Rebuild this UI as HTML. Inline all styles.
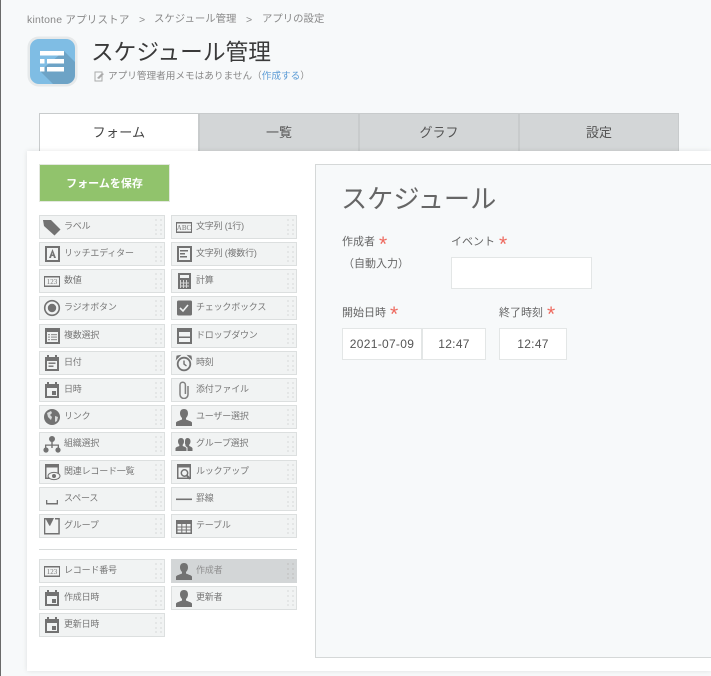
<!DOCTYPE html>
<html lang="ja">
<head>
<meta charset="utf-8">
<style>
html,body{margin:0;padding:0;}
body{width:711px;height:676px;position:relative;overflow:hidden;background:#f7f9fa;font-family:"Liberation Sans","Noto Sans CJK JP",sans-serif;color:#555;}
.a{position:absolute;white-space:nowrap;}
.tab{position:absolute;top:113px;height:38px;width:160px;box-sizing:border-box;background:#d3d6d7;border:1px solid #c8cbcc;border-bottom:0;text-align:center;line-height:38px;font-size:13px;color:#555;}
.it{position:absolute;width:126px;height:24px;box-sizing:border-box;background:#f1f3f3;border:1px solid #dcdfdf;}
.it svg.i{position:absolute;left:3px;top:2px;width:18px;height:18px;fill:#727272;}
.it svg text{font-family:"Liberation Serif",serif;font-size:7px;fill:#777;text-anchor:middle;}
.it span{position:absolute;left:24px;top:0;line-height:20px;font-size:9px;letter-spacing:-.2px;color:#777;white-space:nowrap;}
.it svg.g{position:absolute;left:114px;top:2px;width:9px;height:18px;}
.inp{position:absolute;box-sizing:border-box;background:#fff;border:1px solid #e3e6e6;text-align:center;font-size:12px;color:#555;letter-spacing:.3px;}
.l{position:absolute;font-size:11px;color:#666;white-space:nowrap;line-height:16px;}
.s{position:absolute;font-size:21px;line-height:20px;height:14px;overflow:hidden;color:#ee6a5f;font-family:"Liberation Sans",sans-serif;}
</style>
</head>
<body>
<svg width="0" height="0" style="position:absolute">
<defs>
<symbol id="grip" viewBox="0 0 9 18"><g fill="#e4e6e6"><rect x="1" y="1" width="2" height="2"/><rect x="6" y="1" width="2" height="2"/><rect x="1" y="6" width="2" height="2"/><rect x="6" y="6" width="2" height="2"/><rect x="1" y="11" width="2" height="2"/><rect x="6" y="11" width="2" height="2"/><rect x="1" y="15" width="2" height="2"/><rect x="6" y="15" width="2" height="2"/></g></symbol>
<symbol id="cal" viewBox="0 0 18 18"><path fill-rule="evenodd" d="M4 1h2v2h6V1h2v2h2v14H2V3h2zM4 7v8h10V7z"/><rect x="9" y="10" width="4" height="4"/></symbol>
<symbol id="user" viewBox="0 0 18 18"><path d="M9 1c3 0 4 2 4 4.500 0 2-1 3.500-2 4.500v1.500c2 1 5 1.500 6 3V18H1v-3.500c1-1.500 4-2 6-3V10C6 9 5 7.500 5 5.500 5 3 6 1 9 1z"/></symbol>
</defs>
</svg>

<div class="a" style="left:0;top:0;width:1px;height:676px;background:#6a6a6a;"></div>

<div class="a" style="left:27px;top:13px;font-size:10.500px;line-height:14px;color:#888;letter-spacing:.2px;">kintone アプリストア</div>
<div class="a" style="left:139px;top:13px;font-size:10.500px;line-height:14px;color:#888;">&gt;</div>
<div class="a" style="left:154px;top:13px;font-size:10.400px;line-height:14px;color:#888;">スケジュール管理</div>
<div class="a" style="left:246px;top:13px;font-size:10.500px;line-height:14px;color:#888;">&gt;</div>
<div class="a" style="left:262px;top:13px;font-size:10.400px;line-height:14px;color:#888;">アプリの設定</div>

<svg class="a" style="left:27px;top:36px" width="51" height="51" viewBox="0 0 51 51">
<rect x="0.500" y="0.500" width="50" height="50" rx="11" fill="#e6e9ea"/>
<rect x="3" y="3" width="45" height="45" rx="9" fill="#7fbde4"/>
<path d="M37 15 L48 26 V39 a9 9 0 0 1 -9 9 H26 L13 35 Z" fill="#6da3c6"/>
<g fill="#fff"><rect x="13" y="15" width="24" height="4.500"/><rect x="13" y="23" width="4.500" height="4.500"/><rect x="20" y="23" width="17" height="4.500"/><rect x="13" y="31" width="4.500" height="4.500"/><rect x="20" y="31" width="17" height="4.500"/></g>
</svg>

<div class="a" style="left:91px;top:37px;font-size:22.700px;line-height:30px;color:#3a3a3a;">スケジュール管理</div>
<svg class="a" style="left:94px;top:71px" width="11" height="11" viewBox="0 0 11 11"><path d="M1 1h7v9H1z" fill="none" stroke="#aaa"/><path d="M3 7l5-5 2 1-5 5z" fill="#aaa"/></svg>
<div class="a" style="left:108px;top:70px;font-size:9.650px;line-height:14px;color:#888;">アプリ管理者用メモはありません（<span style="color:#5b9bd5">作成する</span>）</div>

<div class="tab" style="left:39px;background:#fff;color:#444;border-color:#c8cbcc;letter-spacing:.3px;">フォーム</div>
<div class="tab" style="left:199px;">一覧</div>
<div class="tab" style="left:359px;">グラフ</div>
<div class="tab" style="left:519px;">設定</div>

<div class="a" style="left:27px;top:151px;width:684px;height:520px;background:#fff;box-shadow:0 0 5px rgba(0,0,0,.1);"></div>

<div class="a" style="left:39px;top:164px;width:131px;height:38px;box-sizing:border-box;background:#91c36c;border:1px solid #e3e8df;color:#fff;font-size:11px;font-weight:700;text-align:center;line-height:38px;">フォームを保存</div>

<!-- Palette -->
<div class="it" style="left:39px;top:215px"><svg class="i" viewBox="0 0 18 18"><path d="M0 2h8l9.500 9.500-6 6L1 8z"/></svg><span>ラベル</span><svg class="g"><use href="#grip"/></svg></div>
<div class="it" style="left:171px;top:215px"><svg class="i" viewBox="0 0 18 18"><path fill-rule="evenodd" d="M1 4h16v11H1zM2 5.500v8h14v-8z"/><text x="9" y="12">ABC</text></svg><span>文字列 (1行)</span><svg class="g"><use href="#grip"/></svg></div>

<div class="it" style="left:39px;top:242px"><svg class="i" viewBox="0 0 18 18"><path fill-rule="evenodd" d="M2 1h15v16H2zM4 3v12h11V3z"/><path d="M9.500 4l3.500 9h-2l-.6-2H8.600L8 13H6zM9 9.500h1l-.5-2z"/></svg><span>リッチエディター</span><svg class="g"><use href="#grip"/></svg></div>
<div class="it" style="left:171px;top:242px"><svg class="i" viewBox="0 0 18 18"><path fill-rule="evenodd" d="M2 1h15v16H2zM4 3v12h11V3z"/><rect x="5" y="5" width="8" height="1.500"/><rect x="5" y="8" width="5" height="1.500"/><rect x="5" y="11" width="7" height="1.500"/></svg><span>文字列 (複数行)</span><svg class="g"><use href="#grip"/></svg></div>

<div class="it" style="left:39px;top:269px"><svg class="i" viewBox="0 0 18 18"><path fill-rule="evenodd" d="M1 4h16v11H1zM2 5.500v8h14v-8z"/><text x="9" y="12">123</text></svg><span>数値</span><svg class="g"><use href="#grip"/></svg></div>
<div class="it" style="left:171px;top:269px"><svg class="i" viewBox="0 0 18 18"><path fill-rule="evenodd" d="M3 1h13v16H3zM5 3v3h9V3z"/><g fill="#d5d5d5"><rect x="5" y="8" width="1" height="8"/><rect x="8" y="8" width="1" height="8"/><rect x="11" y="8" width="1" height="8"/><rect x="5" y="10.500" width="9" height="1"/><rect x="5" y="13.500" width="9" height="1"/></g></svg><span>計算</span><svg class="g"><use href="#grip"/></svg></div>

<div class="it" style="left:39px;top:296px"><svg class="i" viewBox="0 0 18 18"><circle cx="9" cy="9" r="7.300" fill="none" stroke="#727272" stroke-width="1.600"/><circle cx="9" cy="9" r="4.200"/></svg><span>ラジオボタン</span><svg class="g"><use href="#grip"/></svg></div>
<div class="it" style="left:171px;top:296px"><svg class="i" viewBox="0 0 18 18"><rect x="2" y="1.500" width="15" height="15" rx="1.500"/><path d="M5 9l3 3 5-6" fill="none" stroke="#f1f3f3" stroke-width="1.600"/></svg><span>チェックボックス</span><svg class="g"><use href="#grip"/></svg></div>

<div class="it" style="left:39px;top:324px"><svg class="i" viewBox="0 0 18 18"><path fill-rule="evenodd" d="M2 1h15v16H2zM4 5v10h11V5z"/><g fill="#999"><rect x="5" y="7" width="2" height="1.200"/><rect x="8" y="7" width="6" height="1.200"/><rect x="5" y="9.500" width="2" height="1.200"/><rect x="8" y="9.500" width="6" height="1.200"/><rect x="5" y="12" width="2" height="1.200"/><rect x="8" y="12" width="6" height="1.200"/></g></svg><span>複数選択</span><svg class="g"><use href="#grip"/></svg></div>
<div class="it" style="left:171px;top:324px"><svg class="i" viewBox="0 0 18 18"><path fill-rule="evenodd" d="M2 1h15v16H2zM4 5v10h11V5z"/><rect x="4" y="9.500" width="11" height="1.500"/></svg><span>ドロップダウン</span><svg class="g"><use href="#grip"/></svg></div>

<div class="it" style="left:39px;top:351px"><svg class="i" viewBox="0 0 18 18"><path fill-rule="evenodd" d="M4 1h2v2h6V1h2v2h2v14H2V3h2zM4 7v8h10V7z"/><rect x="5.500" y="8.500" width="7" height="1.400"/><rect x="5.500" y="11.500" width="5" height="1.400"/></svg><span>日付</span><svg class="g"><use href="#grip"/></svg></div>
<div class="it" style="left:171px;top:351px"><svg class="i" viewBox="0 0 18 18"><circle cx="9" cy="10" r="6.300" fill="none" stroke="#727272" stroke-width="1.800"/><path d="M9 6.500V10l2.500 2" fill="none" stroke="#727272" stroke-width="1.400"/><path d="M1.500 5L5 1.500l-3 .5zM16.500 5L13 1.500l3 .5z" stroke="#727272"/></svg><span>時刻</span><svg class="g"><use href="#grip"/></svg></div>

<div class="it" style="left:39px;top:378px"><svg class="i"><use href="#cal"/></svg><span>日時</span><svg class="g"><use href="#grip"/></svg></div>
<div class="it" style="left:171px;top:378px"><svg class="i" viewBox="0 0 18 18"><path d="M13 5v8.500a4 4 0 0 1-8 0V4a2.700 2.700 0 0 1 5.400 0v9" fill="none" stroke="#808080" stroke-width="1.500"/></svg><span>添付ファイル</span><svg class="g"><use href="#grip"/></svg></div>

<div class="it" style="left:39px;top:405px"><svg class="i" viewBox="0 0 18 18"><circle cx="9" cy="9" r="8"/><path d="M4 5l4-2 1 2-2 2 2 2-1 3-3-3zM12 8l3 1-1 4-2 1z" fill="#d8dada"/></svg><span>リンク</span><svg class="g"><use href="#grip"/></svg></div>
<div class="it" style="left:171px;top:405px"><svg class="i"><use href="#user"/></svg><span>ユーザー選択</span><svg class="g"><use href="#grip"/></svg></div>

<div class="it" style="left:39px;top:432px"><svg class="i" viewBox="0 0 18 18"><circle cx="9" cy="4" r="3"/><path d="M8.300 6h1.400v3.500H16V13h-1.300v-2.200H9.700V13H8.300v-2.200H3.300V13H2V9.500h6.300z"/><circle cx="3" cy="15" r="2.600"/><circle cx="15" cy="15" r="2.600"/></svg><span>組織選択</span><svg class="g"><use href="#grip"/></svg></div>
<div class="it" style="left:171px;top:432px"><svg class="i" viewBox="0 0 18 18"><path d="M6 3c2 0 3 1.500 3 3.500 0 1.500-.6 2.500-1.300 3.200V11c1.500.7 3.300 1 3.800 2.200V16H.5v-2.800C1 12 2.800 11.700 4.300 11V9.700C3.600 9 3 8 3 6.500 3 4.500 4 3 6 3z"/><path d="M12.500 3c2 0 3 1.500 3 3.500 0 1.500-.6 2.500-1.300 3.200V11c1.300.5 2.600 1 3.300 2.200V16h-5v-3.500l-2-1.500V9.700C9.800 9 10 8 10 6.500 10 4.500 10.800 3 12.500 3z"/></svg><span>グループ選択</span><svg class="g"><use href="#grip"/></svg></div>

<div class="it" style="left:39px;top:460px"><svg class="i" viewBox="0 0 18 18"><path fill-rule="evenodd" d="M2 1h14v15H2zM3.500 4.500V14.500h11V4.500z"/><ellipse cx="11" cy="13" rx="6" ry="3.600" fill="#f1f3f3" stroke="#727272"/><circle cx="11" cy="13" r="2"/></svg><span>関連レコード一覧</span><svg class="g"><use href="#grip"/></svg></div>
<div class="it" style="left:171px;top:460px"><svg class="i" viewBox="0 0 18 18"><path fill-rule="evenodd" d="M2 1h14v15H2zM3.500 4.500V14.500h11V4.500z"/><circle cx="9.500" cy="10" r="3.200" fill="#f1f3f3" stroke="#727272" stroke-width="1.500"/><path d="M11.700 12.300L15 16" stroke="#727272" stroke-width="2"/></svg><span>ルックアップ</span><svg class="g"><use href="#grip"/></svg></div>

<div class="it" style="left:39px;top:487px"><svg class="i" viewBox="0 0 18 18"><path d="M3 10h1.300v3h9.400v-3H15v4.500H3z"/></svg><span>スペース</span><svg class="g"><use href="#grip"/></svg></div>
<div class="it" style="left:171px;top:487px"><svg class="i" viewBox="0 0 18 18"><rect x="1" y="8.500" width="16" height="1.600"/></svg><span>罫線</span><svg class="g"><use href="#grip"/></svg></div>

<div class="it" style="left:39px;top:514px"><svg class="i" viewBox="0 0 18 18"><path d="M1 1h9v1.500L6.500 9 3 2.500H2.300V16h13V2.500H12V1h4.800v16.500H1z"/><path d="M3 1h8L7 9z"/></svg><span>グループ</span><svg class="g"><use href="#grip"/></svg></div>
<div class="it" style="left:171px;top:514px"><svg class="i" viewBox="0 0 18 18"><path fill-rule="evenodd" d="M1 3h16v14H1zM2.500 7v2.500h3.800V7zM7.300 7v2.500h3.500V7zM11.800 7v2.500h3.700V7zM2.500 10.500V12.500h3.800v-2zM7.300 10.500V12.500h3.500v-2zM11.800 10.500V12.500h3.700v-2zM2.500 13.500v2h3.800v-2zM7.300 13.500v2h3.500v-2zM11.800 13.500v2h3.700v-2z"/></svg><span>テーブル</span><svg class="g"><use href="#grip"/></svg></div>

<div class="a" style="left:39px;top:549px;width:258px;height:1px;background:#d8dbdb;"></div>

<div class="it" style="left:39px;top:559px"><svg class="i" viewBox="0 0 18 18"><path fill-rule="evenodd" d="M1 4h16v11H1zM2 5.500v8h14v-8z"/><text x="9" y="12">123</text></svg><span>レコード番号</span><svg class="g"><use href="#grip"/></svg></div>
<div class="it" style="left:171px;top:559px;background:#d3d6d7;border-color:#d3d6d7;"><svg class="i"><use href="#user"/></svg><span style="color:#8f8f8f">作成者</span><svg class="g" style="filter:brightness(.88)"><use href="#grip"/></svg></div>

<div class="it" style="left:39px;top:586px"><svg class="i"><use href="#cal"/></svg><span>作成日時</span><svg class="g"><use href="#grip"/></svg></div>
<div class="it" style="left:171px;top:586px"><svg class="i"><use href="#user"/></svg><span>更新者</span><svg class="g"><use href="#grip"/></svg></div>

<div class="it" style="left:39px;top:613px"><svg class="i"><use href="#cal"/></svg><span>更新日時</span><svg class="g"><use href="#grip"/></svg></div>

<!-- Form area -->
<div class="a" style="left:315px;top:164px;width:396px;height:494px;box-sizing:border-box;background:#f7f9fa;border:1px solid #d5d8d8;border-right:0;"></div>
<div class="a" style="left:341px;top:180px;font-size:26.200px;line-height:38px;color:#666;">スケジュール</div>

<div class="l" style="left:342px;top:234px;">作成者</div><div class="s" style="left:379px;top:235px;">*</div>
<div class="l" style="left:343px;top:256px;">（自動入力）</div>
<div class="l" style="left:451px;top:234px;">イベント</div><div class="s" style="left:499px;top:235px;">*</div>
<div class="inp" style="left:451px;top:257px;width:141px;height:32px;"></div>

<div class="l" style="left:342px;top:305px;">開始日時</div><div class="s" style="left:390px;top:305px;">*</div>
<div class="l" style="left:499px;top:305px;">終了時刻</div><div class="s" style="left:547px;top:305px;">*</div>
<div class="inp" style="left:342px;top:328px;width:80px;height:32px;line-height:30px;">2021-07-09</div>
<div class="inp" style="left:422px;top:328px;width:64px;height:32px;line-height:30px;">12:47</div>
<div class="inp" style="left:499px;top:328px;width:68px;height:32px;line-height:30px;">12:47</div>
</body>
</html>
